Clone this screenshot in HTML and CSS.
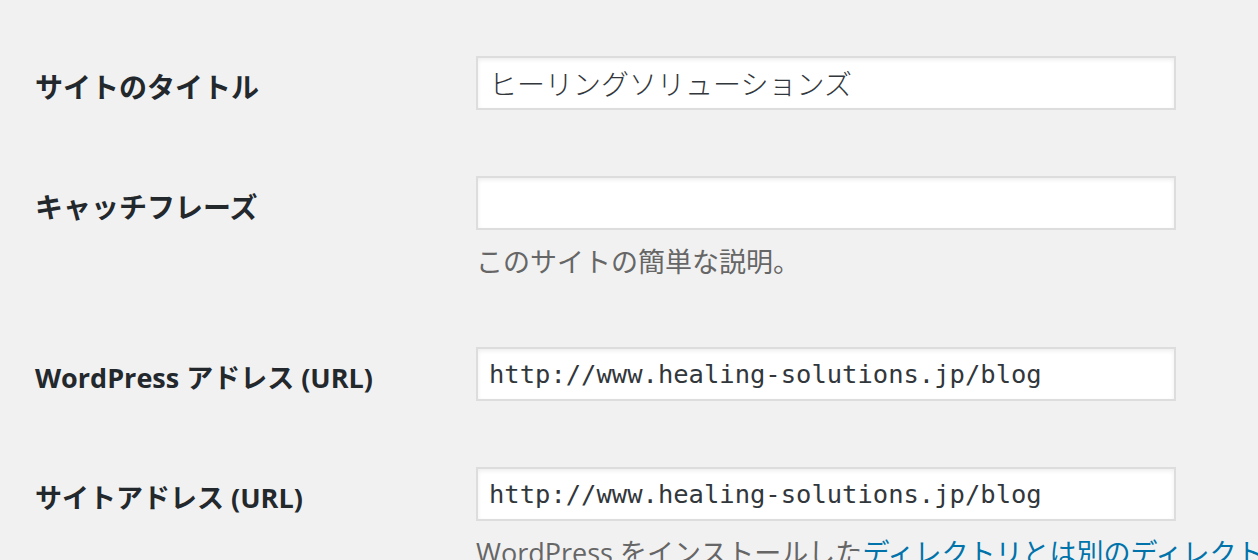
FILE: index.html
```html
<!DOCTYPE html>
<html lang="ja">

<head>
    <meta charset="UTF-8" />
    <title>一般設定</title>
    <link rel="stylesheet" href="styles.css">
</head>

<body>
    <div class="wrap">
        <div class="form-table">
            <div class="row">
                <label class="row-label ja" for="blogname">サイトのタイトル</label>
                <div class="row-field">
                    <input class="regular-text" type="text" id="blogname" value="ヒーリングソリューションズ">
                </div>
            </div>
            <div class="row">
                <label class="row-label ja" for="blogdescription">キャッチフレーズ</label>
                <div class="row-field">
                    <input class="regular-text" type="text" id="blogdescription" value="">
                    <p class="description">このサイトの簡単な説明。</p>
                </div>
            </div>
            <div class="row">
                <label class="row-label" for="siteurl">WordPress アドレス (URL)</label>
                <div class="row-field">
                    <input class="regular-text code" type="url" id="siteurl" value="http://www.healing-solutions.jp/blog">
                </div>
            </div>
            <div class="row">
                <label class="row-label" for="home">サイトアドレス (URL)</label>
                <div class="row-field">
                    <input class="regular-text code" type="url" id="home" value="http://www.healing-solutions.jp/blog">
                    <p class="description">WordPress をインストールした<a href="#">ディレクトリとは別のディレクトリにサイトのホームページを設置したい</a>場合は、ここにアドレスを入力してください。</p>
                </div>
            </div>
        </div>
    </div>
</body>

</html>
```

FILE: styles.css
```css
html,
body {
    margin: 0;
    background-color: #f1f1f1;
    overflow: hidden;
}

body {
    font-family: "Open Sans", "Noto Sans CJK JP", sans-serif;
    color: #23282d;
}

.wrap {
    padding: 26px 0 0 35px;
}

.row {
    display: flex;
}

.row-label {
    flex: 0 0 441px;
    padding-top: 40px;
    font-size: 27px;
    font-weight: 700;
    line-height: 42px;
    white-space: nowrap;
}

.row-label.ja {
    font-size: 28px;
}

.row-field {
    padding: 30px 0;
    min-width: 0;
}

.regular-text {
    display: block;
    box-sizing: border-box;
    width: 700px;
    height: 54px;
    margin: 0 0 6px;
    padding: 0 11px;
    border: 2px solid #ddd;
    background-color: #fff;
    box-shadow: inset 0 2px 4px rgba(0, 0, 0, 0.07);
    font-family: "Noto Sans CJK JP", sans-serif;
    font-size: 28px;
    font-weight: 300;
    color: #32373c;
    outline: none;
}

.regular-text.code {
    font-family: "DejaVu Sans Mono", monospace;
    font-size: 25.5px;
    font-weight: 400;
}

.description {
    margin: 0;
    line-height: 51px;
    font-size: 27px;
    color: #666;
    white-space: nowrap;
}

.description a {
    color: #0073aa;
    text-decoration: none;
}
```
